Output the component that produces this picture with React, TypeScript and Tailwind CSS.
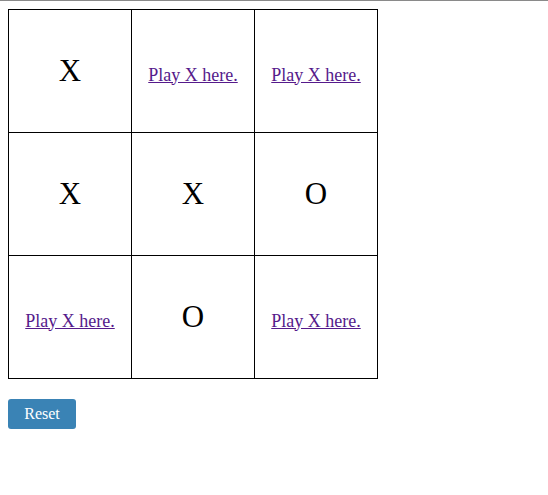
import React from "react";

const board = [
  ["X", "", ""],
  ["X", "X", "O"],
  ["", "O", ""],
];

export default function App() {
  return (
    <div className="min-h-[495px] bg-white border-t border-[#8a8a8a] p-2 font-['Liberation_Serif',serif] text-black">
      <div className="grid grid-cols-[repeat(3,123px)] w-[370px] border-l border-t border-black">
        {board.flat().map((cell, i) => (
          <div
            key={i}
            className="h-[123px] border-r border-b border-black flex items-center justify-center"
          >
            {cell ? (
              <span className="text-[31px] leading-none -mt-[2px]">{cell}</span>
            ) : (
              <a href="#" className="text-[18px] text-[#551a8b] underline mt-[8px]">
                Play X here.
              </a>
            )}
          </div>
        ))}
      </div>
      <button className="mt-5 h-[30px] w-[68px] rounded-[3px] bg-[#3a83b5] text-white text-base">
        Reset
      </button>
    </div>
  );
}
